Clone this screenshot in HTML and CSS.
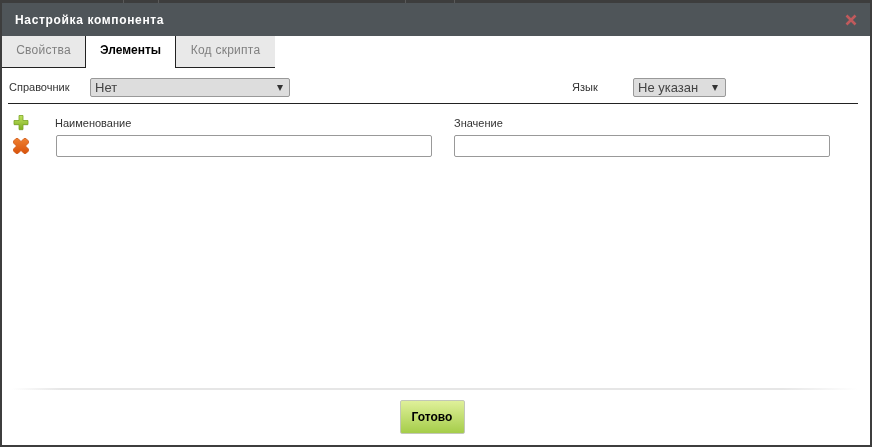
FILE: index.html
```html
<!DOCTYPE html>
<html lang="ru">
<head>
<meta charset="utf-8">
<title>Настройка компонента</title>
<link rel="stylesheet" href="styles.css">
</head>
<body>
<div class="backdrop-strip">
  <i class="bd b1"></i><i class="bd b2"></i><i class="bd b3"></i><i class="bd b4"></i>
</div>
<main class="modal">
  <header class="modal-head">
    <h1 class="modal-title">Настройка компонента</h1>
    <svg class="close-icon" width="12" height="12" viewBox="0 0 12 12" aria-hidden="true"><path d="M1.500 1.500L10.500 10.500M10.500 1.500L1.500 10.500" stroke="#c05a5c" stroke-width="2.600"/></svg>
  </header>
  <nav class="tabs">
    <div class="tab tab-first">Свойства</div>
    <div class="tab tab-active">Элементы</div>
    <div class="tab tab-last">Код скрипта</div>
  </nav>
  <section class="filters">
    <span class="label label-ref">Справочник</span>
    <div class="select select-ref"><span>Нет</span><i class="arrow"></i></div>
    <span class="label label-lang">Язык</span>
    <div class="select select-lang"><span>Не указан</span><i class="arrow"></i></div>
  </section>
  <section class="rows">
    <div class="actions">
      <svg width="18" height="18" viewBox="0 0 18 18" aria-hidden="true">
        <defs><linearGradient id="gp" x1="0" y1="0" x2="0" y2="1"><stop offset="0" stop-color="#bfe35f"/><stop offset="1" stop-color="#7fae22"/></linearGradient></defs>
        <path d="M7 2.500h4v5h5v4h-5v5h-4v-5h-5v-4h5z" fill="#d5d9cc"/>
        <path d="M7 1.500h4v5h5v4h-5v5h-4v-5h-5v-4h5z" fill="url(#gp)" stroke="#7aa324" stroke-width=".8"/>
      </svg>
      <svg width="18" height="18" viewBox="0 0 18 18" aria-hidden="true">
        <defs><linearGradient id="gx" x1="0" y1="0" x2="0" y2="1"><stop offset="0" stop-color="#ef7f30"/><stop offset="1" stop-color="#d9530b"/></linearGradient></defs>
        <path d="M4 1.500L6 1.500 9 4.500 12 1.500 14 1.500 16.500 4 16.500 6 13.500 9 16.500 12 16.500 14 14 16.500 12 16.500 9 13.500 6 16.500 4 16.500 1.500 14 1.500 12 4.500 9 1.500 6 1.500 4z" fill="url(#gx)" stroke="#cc4f0a" stroke-width=".7" stroke-linejoin="round"/>
      </svg>
    </div>
    <div class="field field-name">
      <label class="label label-name">Наименование</label>
      <div class="input"></div>
    </div>
    <div class="field field-value">
      <label class="label">Значение</label>
      <div class="input"></div>
    </div>
  </section>
  <footer class="modal-foot">
    <button class="done" type="button">Готово</button>
  </footer>
</main>
</body>
</html>
```
FILE: styles.css
```css
* { box-sizing: border-box; }
html, body { margin: 0; padding: 0; }
body {
  width: 872px;
  height: 447px;
  overflow: hidden;
  background: #3d3d3d;
  font-family: "Liberation Sans", Arial, sans-serif;
  position: relative;
  padding: 3px 2px 2px 2px;
}
.backdrop-strip { position: absolute; left: 0; right: 0; top: 0; height: 3px; }
.bd { position: absolute; top: 0; width: 1px; height: 3px; background: #5a5a5a; }
.b1 { left: 123px; }
.b2 { left: 158px; }
.b3 { left: 405px; }
.b4 { left: 454px; }
.modal {
  height: 442px;
  background: #fff;
  display: flex;
  flex-direction: column;
  will-change: transform;
}
.modal-head {
  height: 33px;
  flex: none;
  background: #4f5559;
  display: flex;
  align-items: center;
  justify-content: space-between;
  padding: 0 13px 0 13px;
}
.modal-title {
  margin: 0;
  color: #fff;
  font-size: 12px;
  font-weight: bold;
  letter-spacing: 0.65px;
}
.close-icon { margin-top: 1px; }
.tabs {
  display: flex;
  height: 32px;
  flex: none;
}
.tab {
  height: 32px;
  font-size: 12px;
  line-height: 29px;
  text-align: center;
  background: #e9e9e9;
  color: #808080;
  letter-spacing: .25px;
  border-bottom: 1px solid #222;
}
.tab-first { width: 84px; border-right: 1px solid #222; }
.tab-active {
  width: 90px;
  background: #fff;
  color: #000;
  font-weight: bold;
  letter-spacing: 0;
  border-bottom: 0;
  border-right: 1px solid #222;
}
.tab-last { width: 99px; }
.filters {
  margin: 0 12px 0 6px;
  height: 36px;
  flex: none;
  border-bottom: 1px solid #222;
  display: flex;
  align-items: flex-start;
  padding-top: 10px;
}
.label { font-size: 11px; color: #333; display: block; }
.filters .label { line-height: 18px; }
.label-ref { width: 81px; margin-left: 1px; }
.label-lang { width: 61px; margin-left: 282px; }
.select {
  height: 19px;
  background: #ddd;
  border: 1px solid #999;
  border-radius: 2px;
  font-size: 13px;
  color: #444;
  padding-left: 4px;
  line-height: 17px;
  display: flex;
  justify-content: space-between;
  align-items: center;
}
.select-ref { width: 200px; }
.select-lang { width: 93px; }
.select-ref .arrow { margin-right: 6px; }
.select-lang .arrow { margin-right: 7px; }
.arrow {
  width: 0;
  height: 0;
  border-left: 3.500px solid transparent;
  border-right: 3.500px solid transparent;
  border-top: 6px solid #333;
}
.rows {
  flex: 1;
  display: flex;
  align-items: flex-start;
  padding: 10px 0 0 10px;
}
.actions {
  width: 44px;
  flex: none;
  display: flex;
  flex-direction: column;
  gap: 5px;
}
.actions svg { display: block; }
.field { width: 376px; padding-top: 2px; }
.field-value { margin-left: 22px; }
.field .label { line-height: 14px; margin-bottom: 5px; }
.field .label-name { margin-left: -1px; }
.input {
  width: 376px;
  height: 22px;
  background: #fff;
  border: 1px solid #999;
  border-radius: 2px;
}
.modal-foot {
  height: 57px;
  flex: none;
  display: flex;
  justify-content: center;
  padding: 12px 8px 0 0;
  background: linear-gradient(90deg, transparent 10px, #e6e6e6 60px, #e6e6e6 780px, transparent 855px) top / 100% 2px no-repeat #fff;
}
.done {
  width: 65px;
  height: 34px;
  border: 1px solid #c2c7b8;
  border-radius: 2px;
  background: linear-gradient(#dff09a, #a5cd4a);
  font-family: "Liberation Sans", Arial, sans-serif;
  font-size: 12px;
  font-weight: bold;
  color: #000;
  padding: 0;
}
```
